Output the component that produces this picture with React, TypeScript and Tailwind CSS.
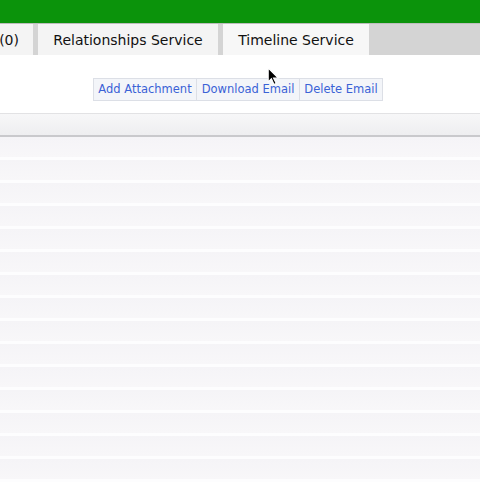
import React from 'react';

const rows: number[] = Array.from({ length: 15 }, (_, i) => i);

function Cursor(): JSX.Element {
  return (
    <svg className="absolute left-[267px] top-[67px]" width="13" height="19" viewBox="0 0 12 18">
      <path d="M1 1 L1 14 L4 11 L6.5 16.5 L8.5 15.5 L6 10.5 L10.5 10.5 Z" fill="#000" stroke="#fff" strokeWidth="1" />
    </svg>
  );
}

export default function App(): JSX.Element {
  return (
    <div className="relative w-[480px] h-[484px] overflow-hidden bg-white font-['DejaVu_Sans',Verdana,sans-serif]">
      <div className="h-[23px] bg-[#0b930b]" />

      <div className="flex h-[32px] bg-[#d4d4d4] border-t border-[#bdbdbd] text-[14px] text-[#111]">
        <div className="w-[33px] bg-[#f4f4f4] flex items-center justify-end pr-[14px] pt-[2px] overflow-hidden whitespace-nowrap">(0)</div>
        <div className="w-[5px]" />
        <div className="w-[180px] bg-[#f4f4f4] flex items-center justify-center pt-[2px]">Relationships Service</div>
        <div className="w-[5px]" />
        <div className="w-[146px] bg-[#f7f7f7] flex items-center justify-center pt-[2px]">Timeline Service</div>
      </div>

      <div className="h-[58px] flex items-start pl-[93px] pt-[23px]">
        <div className="flex h-[23px] border border-[#dcdfe6] bg-[#f3f5f9] text-[11.5px] text-[#3a62d6]">
          <div className="w-[103px] flex items-center justify-center border-r border-[#dcdfe6]">Add Attachment</div>
          <div className="w-[103px] flex items-center justify-center border-r border-[#dcdfe6]">Download Email</div>
          <div className="w-[82px] flex items-center justify-center">Delete Email</div>
        </div>
      </div>

      <div className="h-[24px] border-t border-[#e2e2e4] border-b-2 border-b-[#c9c9cc] bg-gradient-to-b from-[#f7f7f8] to-[#eeeef0]" />

      <div className="flex flex-col">
        {rows.map((i: number) => (
          <div key={i} className="h-[23px] border-b-[3px] border-[#fdfdfe] bg-gradient-to-b from-[#f5f4f7] to-[#f8f7f9]" />
        ))}
      </div>

      <Cursor />
    </div>
  );
}
